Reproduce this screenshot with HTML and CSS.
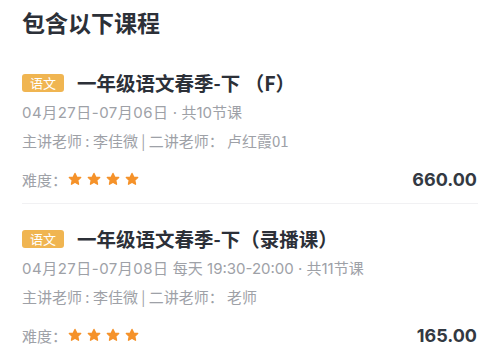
FILE: index.html
```html
<!DOCTYPE html>
<html lang="zh-CN">
<head>
    <meta charset="UTF-8">
    <meta name="viewport" content="width=device-width, initial-scale=1.0">
    <title>包含以下课程</title>
    <link rel="stylesheet" href="styles.css">
</head>
<body>
    <div class="container">
        <div class="section-title">包含以下课程</div>

        <div class="course">
            <div class="course-head">
                <span class="tag">语文</span>
                <span class="course-name">一年级语文春季-下 （F）</span>
            </div>
            <div class="meta"><span class="dates">04月27日-07月06日</span> · 共10节课</div>
            <div class="meta teachers">主讲老师 : 李佳微 | 二讲老师：&nbsp;卢红霞01</div>
            <div class="course-foot">
                <div class="level">
                    难度：
                    <span class="stars">
                        <svg class="star" viewBox="0 0 24 24"><path d="M12 2.5l2.9 6.2 6.8.8-5 4.7 1.3 6.7L12 17.5l-6 3.4 1.3-6.7-5-4.7 6.8-.8z"/></svg>
                        <svg class="star" viewBox="0 0 24 24"><path d="M12 2.5l2.9 6.2 6.8.8-5 4.7 1.3 6.7L12 17.5l-6 3.4 1.3-6.7-5-4.7 6.8-.8z"/></svg>
                        <svg class="star" viewBox="0 0 24 24"><path d="M12 2.5l2.9 6.2 6.8.8-5 4.7 1.3 6.7L12 17.5l-6 3.4 1.3-6.7-5-4.7 6.8-.8z"/></svg>
                        <svg class="star" viewBox="0 0 24 24"><path d="M12 2.5l2.9 6.2 6.8.8-5 4.7 1.3 6.7L12 17.5l-6 3.4 1.3-6.7-5-4.7 6.8-.8z"/></svg>
                    </span>
                </div>
                <div class="price">660.00</div>
            </div>
        </div>

        <div class="course">
            <div class="course-head">
                <span class="tag">语文</span>
                <span class="course-name">一年级语文春季-下（录播课）</span>
            </div>
            <div class="meta"><span class="dates">04月27日-07月08日</span> 每天 19:30-20:00 · 共11节课</div>
            <div class="meta teachers">主讲老师 : 李佳微 | 二讲老师：&nbsp;老师</div>
            <div class="course-foot">
                <div class="level">
                    难度：
                    <span class="stars">
                        <svg class="star" viewBox="0 0 24 24"><path d="M12 2.5l2.9 6.2 6.8.8-5 4.7 1.3 6.7L12 17.5l-6 3.4 1.3-6.7-5-4.7 6.8-.8z"/></svg>
                        <svg class="star" viewBox="0 0 24 24"><path d="M12 2.5l2.9 6.2 6.8.8-5 4.7 1.3 6.7L12 17.5l-6 3.4 1.3-6.7-5-4.7 6.8-.8z"/></svg>
                        <svg class="star" viewBox="0 0 24 24"><path d="M12 2.5l2.9 6.2 6.8.8-5 4.7 1.3 6.7L12 17.5l-6 3.4 1.3-6.7-5-4.7 6.8-.8z"/></svg>
                        <svg class="star" viewBox="0 0 24 24"><path d="M12 2.5l2.9 6.2 6.8.8-5 4.7 1.3 6.7L12 17.5l-6 3.4 1.3-6.7-5-4.7 6.8-.8z"/></svg>
                    </span>
                </div>
                <div class="price">165.00</div>
            </div>
        </div>
    </div>
</body>
</html>
```

FILE: styles.css
```css
/* Colours */
:root {
    --text-color: #2c3038;
    --muted-color: #9ea1a7;
    --tag-color: #f0b551;
    --star-color: #f5922a;
    --line-color: #f1f1f3;
}

body {
    margin: 0;
    padding: 0;
    background: #fff;
    font-family: "Noto Sans CJK SC", "Noto Sans", sans-serif;
    color: var(--text-color);
}

.container {
    padding: 10px 22px 0;
}

.section-title {
    font-size: 23px;
    line-height: 24px;
    font-weight: bold;
    margin-bottom: 14px;
}

.course {
    padding: 23px 0 14px;
    border-bottom: 1px solid var(--line-color);
}

.course-head {
    display: flex;
    align-items: center;
    height: 24px;
}

.tag {
    display: inline-block;
    width: 42px;
    height: 18px;
    line-height: 18px;
    border-radius: 3px;
    background: var(--tag-color);
    color: #fff;
    font-size: 13px;
    text-align: center;
    margin-right: 13px;
}

.course-name {
    font-size: 19.5px;
    line-height: 24px;
    font-weight: bold;
}

.meta {
    margin-top: 8px;
    font-family: Inter, "Noto Sans CJK SC", sans-serif;
    font-size: 15px;
    line-height: 20px;
    color: var(--muted-color);
}

.dates {
    letter-spacing: 0.5px;
}

.teachers {
    font-family: "Noto Sans CJK SC", sans-serif;
}

.course-foot {
    display: flex;
    justify-content: space-between;
    align-items: center;
    margin-top: 18px;
    height: 20px;
}

.level {
    display: flex;
    align-items: center;
    font-size: 15px;
    color: var(--muted-color);
}

.stars {
    display: flex;
    gap: 5px;
    margin-left: 1px;
}

.star {
    width: 14px;
    height: 14px;
    fill: var(--star-color);
    stroke: var(--star-color);
    stroke-width: 2.4;
    stroke-linejoin: round;
}

.price {
    font-family: Inter, "Liberation Sans", sans-serif;
    font-size: 18px;
    font-weight: bold;
    color: #333942;
    padding-right: 1px;
}
```
